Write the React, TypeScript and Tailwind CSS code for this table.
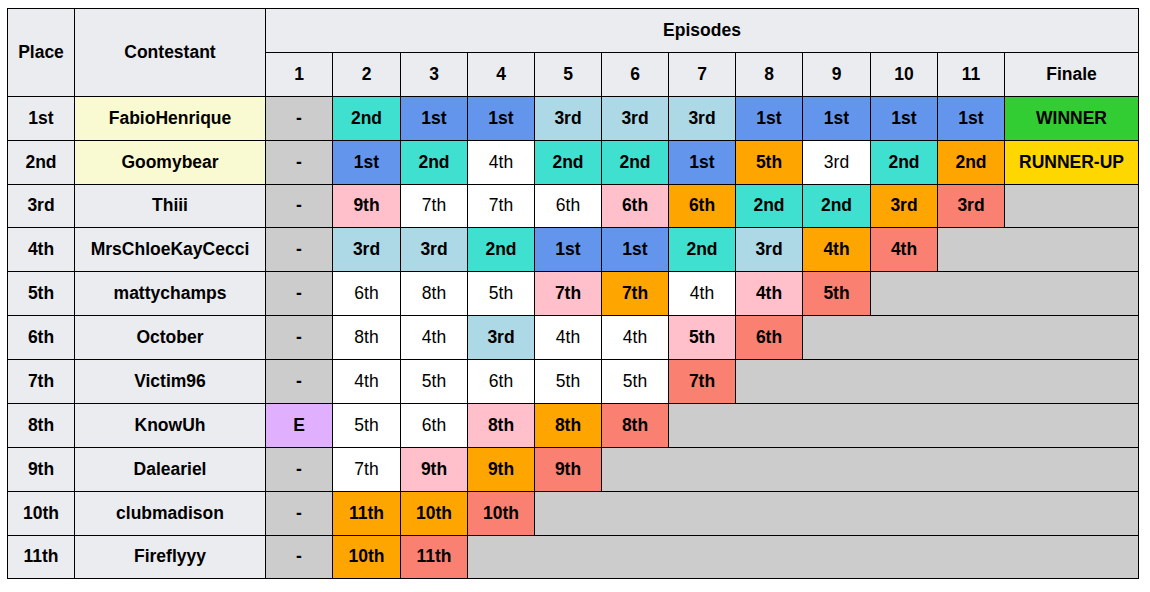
import React from "react";

type Cell = { t: string; c: string; b?: boolean };

const C: Record<string, string> = {
  tq: "bg-[#40e0d0]",
  bl: "bg-[#6495ed]",
  lb: "bg-[#add8e6]",
  or: "bg-[#ffa500]",
  pk: "bg-[#ffc0cb]",
  sa: "bg-[#fa8072]",
  wh: "bg-white",
  gr: "bg-[#cccccc]",
  mv: "bg-[#e0b0ff]",
};

const s = (t: string, c: string): Cell => ({ t, c, b: c !== "wh" });

type Row = {
  place: string;
  name: string;
  hl?: boolean;
  cells: Cell[];
  finale?: { t: string; c: string };
};

const rows: Row[] = [
  {
    place: "1st",
    name: "FabioHenrique",
    hl: true,
    cells: [s("-", "gr"), s("2nd", "tq"), s("1st", "bl"), s("1st", "bl"), s("3rd", "lb"), s("3rd", "lb"), s("3rd", "lb"), s("1st", "bl"), s("1st", "bl"), s("1st", "bl"), s("1st", "bl")],
    finale: { t: "WINNER", c: "bg-[#32cd32]" },
  },
  {
    place: "2nd",
    name: "Goomybear",
    hl: true,
    cells: [s("-", "gr"), s("1st", "bl"), s("2nd", "tq"), s("4th", "wh"), s("2nd", "tq"), s("2nd", "tq"), s("1st", "bl"), s("5th", "or"), s("3rd", "wh"), s("2nd", "tq"), s("2nd", "or")],
    finale: { t: "RUNNER-UP", c: "bg-[#ffd700]" },
  },
  {
    place: "3rd",
    name: "Thiii",
    cells: [s("-", "gr"), s("9th", "pk"), s("7th", "wh"), s("7th", "wh"), s("6th", "wh"), s("6th", "pk"), s("6th", "or"), s("2nd", "tq"), s("2nd", "tq"), s("3rd", "or"), s("3rd", "sa")],
  },
  {
    place: "4th",
    name: "MrsChloeKayCecci",
    cells: [s("-", "gr"), s("3rd", "lb"), s("3rd", "lb"), s("2nd", "tq"), s("1st", "bl"), s("1st", "bl"), s("2nd", "tq"), s("3rd", "lb"), s("4th", "or"), s("4th", "sa")],
  },
  {
    place: "5th",
    name: "mattychamps",
    cells: [s("-", "gr"), s("6th", "wh"), s("8th", "wh"), s("5th", "wh"), s("7th", "pk"), s("7th", "or"), s("4th", "wh"), s("4th", "pk"), s("5th", "sa")],
  },
  {
    place: "6th",
    name: "October",
    cells: [s("-", "gr"), s("8th", "wh"), s("4th", "wh"), s("3rd", "lb"), s("4th", "wh"), s("4th", "wh"), s("5th", "pk"), s("6th", "sa")],
  },
  {
    place: "7th",
    name: "Victim96",
    cells: [s("-", "gr"), s("4th", "wh"), s("5th", "wh"), s("6th", "wh"), s("5th", "wh"), s("5th", "wh"), s("7th", "sa")],
  },
  {
    place: "8th",
    name: "KnowUh",
    cells: [s("E", "mv"), s("5th", "wh"), s("6th", "wh"), s("8th", "pk"), s("8th", "or"), s("8th", "sa")],
  },
  {
    place: "9th",
    name: "Daleariel",
    cells: [s("-", "gr"), s("7th", "wh"), s("9th", "pk"), s("9th", "or"), s("9th", "sa")],
  },
  {
    place: "10th",
    name: "clubmadison",
    cells: [s("-", "gr"), s("11th", "or"), s("10th", "or"), s("10th", "sa")],
  },
  {
    place: "11th",
    name: "Fireflyyy",
    cells: [s("-", "gr"), s("10th", "or"), s("11th", "sa")],
  },
];

const bd = "border border-[#000000] p-0 pb-[2px]";

export default function App() {
  return (
    <div
      className="w-[1150px] h-[592px] bg-white pl-[7px] pt-[8px]"
      style={{ fontFamily: '"Liberation Sans", Arial, sans-serif' }}
    >
      <table className="table-fixed border-collapse text-[17.5px] leading-[20px] text-[#000000] text-center">
        <colgroup>
          <col className="w-[67px]" />
          <col className="w-[191px]" />
          <col className="w-[67px]" />
          <col className="w-[68px]" />
          <col className="w-[67px]" />
          <col className="w-[67px]" />
          <col className="w-[67px]" />
          <col className="w-[67px]" />
          <col className="w-[67px]" />
          <col className="w-[67px]" />
          <col className="w-[68px]" />
          <col className="w-[67px]" />
          <col className="w-[67px]" />
          <col className="w-[134px]" />
        </colgroup>
        <thead>
          <tr className="h-[44px]">
            <th rowSpan={2} className={`${bd} bg-[#eaecf0] font-bold`}>
              Place
            </th>
            <th rowSpan={2} className={`${bd} bg-[#eaecf0] font-bold`}>
              Contestant
            </th>
            <th colSpan={12} className={`${bd} bg-[#eaecf0] font-bold`}>
              Episodes
            </th>
          </tr>
          <tr className="h-[44px]">
            {["1", "2", "3", "4", "5", "6", "7", "8", "9", "10", "11", "Finale"].map((h) => (
              <th key={h} className={`${bd} bg-[#eaecf0] font-bold`}>
                {h}
              </th>
            ))}
          </tr>
        </thead>
        <tbody>
          {rows.map((r, i) => {
            const rest = 12 - r.cells.length - (r.finale ? 1 : 0);
            return (
              <tr key={r.place} className={i === 10 || i === 2 ? "h-[43px]" : "h-[44px]"}>
                <td className={`${bd} bg-[#eaecf0] font-bold`}>{r.place}</td>
                <td className={`${bd} ${r.hl ? "bg-[#fafad2]" : "bg-[#eaecf0]"} font-bold`}>{r.name}</td>
                {r.cells.map((c, j) => (
                  <td key={j} className={`${bd} ${C[c.c]} ${c.b ? "font-bold" : "font-normal"}`}>
                    {c.t}
                  </td>
                ))}
                {r.finale && <td className={`${bd} ${r.finale.c} font-bold`}>{r.finale.t}</td>}
                {rest > 0 && <td colSpan={rest} className={`${bd} bg-[#cccccc]`}></td>}
              </tr>
            );
          })}
        </tbody>
      </table>
    </div>
  );
}
